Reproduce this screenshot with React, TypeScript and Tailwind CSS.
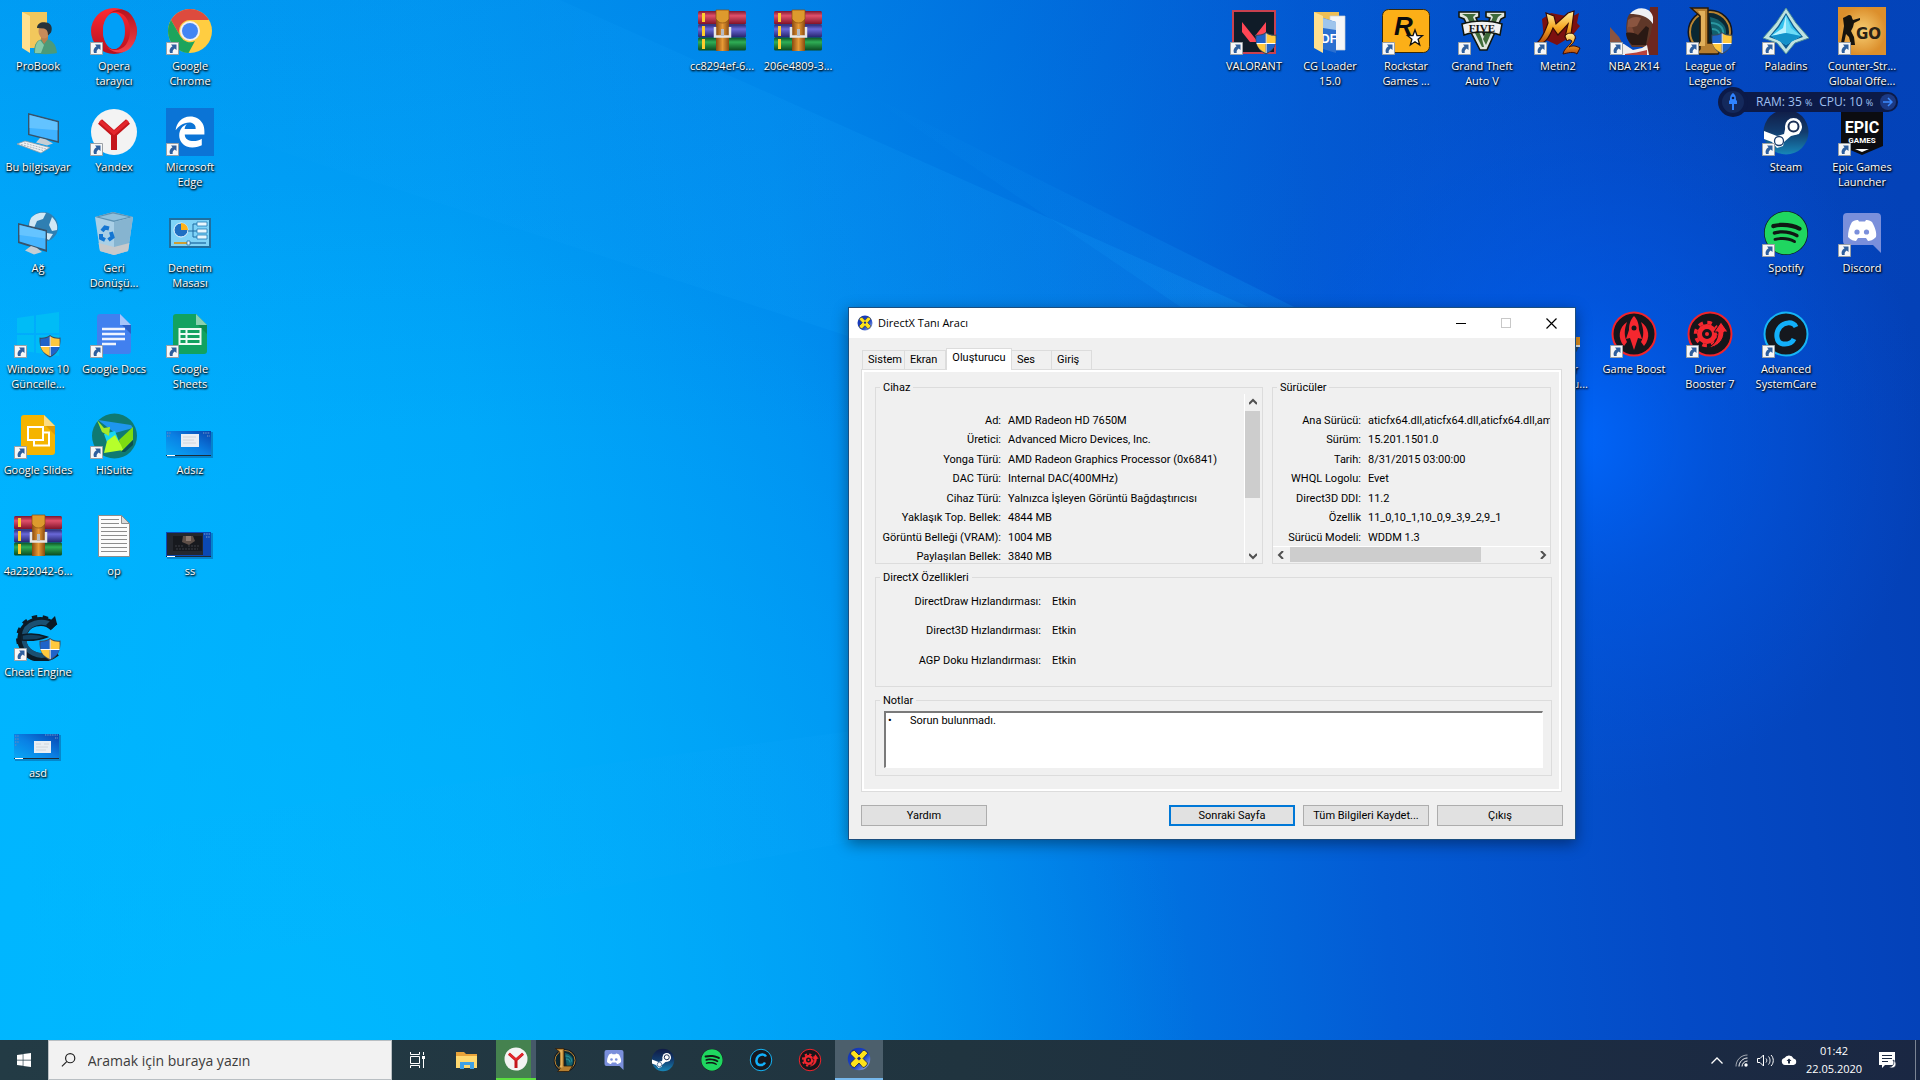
import type { ReactNode } from "react";
import { FaEdgeLegacy, FaSpotify, FaWindows } from "react-icons/fa";

type IconProps = { className?: string };

function Svg({ className = "h-12 w-12", children }: IconProps & { children: ReactNode }) {
  return (
    <svg viewBox="0 0 48 48" className={className} aria-hidden="true">
      {children}
    </svg>
  );
}

/* ---------- overlays ---------- */

function Shield() {
  return (
    <g>
      <path d="M36 25c3 2.500 7 3 10.500 2.500C47 38 43.500 43.500 36 47.500 28.500 43.500 25 38 25.500 27.500 29 28 33 27.500 36 25z" fill="#3a4a5e" />
      <path d="M35.500 26.500v9.500H26.500c-.3-2.500-.2-5 0-7.300 3.500.2 6.500-.3 9-2.200z" fill="#1f63c9" />
      <path d="M36.500 26.500c2.500 1.900 5.500 2.400 9 2.200.2 2.300.3 4.800 0 7.300h-9z" fill="#ffc83d" />
      <path d="M26.700 37h8.800v9c-5-2.500-7.800-5.500-8.800-9z" fill="#ffc83d" />
      <path d="M36.500 37h8.800c-1 3.500-3.800 6.500-8.800 9z" fill="#1f63c9" />
      <path d="M35.700 26.500h.9v19.500h-.9zM26.500 36h19v.9h-19z" fill="#fff" />
    </g>
  );
}

function ShortcutBadge() {
  return (
    <svg viewBox="0 0 13 13" className="absolute bottom-0 left-0 h-[13px] w-[13px]" aria-hidden="true">
      <path d="M.5.5h12v12H.5z" fill="#f7f7f7" stroke="#9aa0a6" />
      <path d="M5 2.500h5.500V8L8.700 6.400C6.900 7.600 6.400 9 6.700 11H4C2.900 8.300 3.900 5.700 6.500 4.200z" fill="#2e5f9e" />
    </svg>
  );
}

/* ---------- desktop icons ---------- */

function UserFolder({ className }: IconProps) {
  return (
    <Svg className={className}>
      <path d="M8 5h25v36H16l-8-1z" fill="#f2c75c" />
      <path d="M8 5l8 4v37l-8-5z" fill="#ffe08f" />
      <path d="M20 46c0-9 3-14 10-14 8 0 12 5 13 14-6 1.500-17 1.500-23 0z" fill="#4c9a78" />
      <path d="M27 32l3 5 4-5v-5h-7z" fill="#b57f4f" />
      <ellipse cx="30" cy="24" rx="5.500" ry="7.500" fill="#c68b5a" />
      <path d="M23 21c0-5 5-6.500 9-5.500 5 .5 7 5 5 10l-3 3c0-4-1-6-4-7z" fill="#26323a" />
      <path d="M26 33l4 5-3 8h-6c0-6 1-11 5-13z" fill="#86c9a8" />
    </Svg>
  );
}

function Opera({ className }: IconProps) {
  return (
    <Svg className={className}>
      <defs>
        <linearGradient id="opera-a" x1="0" y1="0" x2="0" y2="1">
          <stop offset="0" stopColor="#ff2a32" />
          <stop offset="1" stopColor="#b5101f" />
        </linearGradient>
        <linearGradient id="opera-b" x1="0" y1="0" x2="0" y2="1">
          <stop offset="0" stopColor="#a90e1a" />
          <stop offset="1" stopColor="#ff4a50" />
        </linearGradient>
      </defs>
      <path fillRule="evenodd" d="M24 1a23 23 0 1 0 0 46 23 23 0 0 0 0-46zm0 5c5.500 0 10 8 10 18s-4.500 18-10 18-11-8-11-18S18.500 6 24 6z" fill="url(#opera-a)" />
      <path d="M17 9c3-3 5-4 8-4 9 0 15 8 15 19s-6 19-15 19c-3 0-5-1-8-3 8 8 20 7 25-1 6-8 6-22 0-30C37 1 25 0 17 9z" fill="url(#opera-b)" opacity=".85" />
      <ellipse cx="24" cy="24" rx="11" ry="18" fill="#009ff8" />
    </Svg>
  );
}

function Chrome({ className }: IconProps) {
  return (
    <Svg className={className}>
      <circle cx="24" cy="24" r="22" fill="#ffcd41" />
      <path d="M5 13A22 22 0 0 1 43 13H24a11 11 0 0 0-9.500 16.500z" fill="#dd4b3e" />
      <path d="M5 13l9.500 16.500A11 11 0 0 0 29 34l-6.500 12A22 22 0 0 1 5 13z" fill="#1ca45c" />
      <circle cx="24" cy="24" r="10" fill="#f1f1f1" />
      <circle cx="24" cy="24" r="8" fill="#4285f4" />
    </Svg>
  );
}

function ThisPc({ className }: IconProps) {
  return (
    <Svg className={className}>
      <path d="M14 5l31 8v22l-31-8z" fill="#37536b" />
      <path d="M15.500 7l28 7.300v18.700l-28-7z" fill="#3fb2ff" />
      <path d="M15.500 7l28 7.300v8L15.500 20z" fill="#74cbff" opacity=".7" />
      <path d="M26 30l6 1.500 7 4-6 2-11-3z" fill="#c6ced4" />
      <path d="M3 36l8-3 25 6.500-9 5.500z" fill="#eef1f3" stroke="#8e9aa3" strokeWidth=".8" />
      <path d="M7 36.500l22 6M10 35l22 6" stroke="#98a4ad" strokeWidth=".8" strokeDasharray="2 1" />
    </Svg>
  );
}

function Yandex({ className }: IconProps) {
  return (
    <Svg className={className}>
      <circle cx="24" cy="24" r="23" fill="#f3f3f3" />
      <path d="M10 13.500l14 12.500 14-12.500M24 25v17" fill="none" stroke="#c4161c" strokeWidth="6" />
      <path d="M10 13l14 12 14-12" fill="none" stroke="#e3262c" strokeWidth="3.500" />
    </Svg>
  );
}

function Edge() {
  return (
    <div className="flex h-12 w-12 items-center justify-center bg-[#0b74d6]">
      <FaEdgeLegacy className="h-8 w-8 text-white" />
    </div>
  );
}

function Network({ className }: IconProps) {
  return (
    <Svg className={className}>
      <circle cx="29" cy="18" r="15" fill="#2f7fb2" />
      <path d="M17 9c4-5 10-6 15-5l-3 6-6 2-3 7-5 1c0-4 0-7 2-11zM38 8c4 4 6 8 5 13l-5 1-3-6zM33 24l6 1-4 6-4-2z" fill="#cfe8f5" />
      <path d="M4 14l29 7v22L4 34z" fill="#37536b" />
      <path d="M5.500 16l26 6.500v18L5.500 32.500z" fill="#45b5ff" />
      <path d="M5.500 16l26 6.500v7L5.500 26z" fill="#7ccfff" opacity=".6" />
      <path d="M17 37l6 2 5 4-8 2.500-9-4z" fill="#c6ced4" />
    </Svg>
  );
}

function RecycleBin({ className }: IconProps) {
  return (
    <Svg className={className}>
      <path d="M5 8l18-5 20 5-5 34-14 4-14-4z" fill="#a9cfe6" />
      <path d="M5 8l18-5 20 5-19 5z" fill="#5d92b3" />
      <path d="M9 8l14-3.500L39 8l-15 3.500z" fill="#8fc0dc" />
      <path d="M24 13l19-5-5 34-14 4z" fill="#86b4d0" />
      <path d="M8.500 34l15.500 4 15.500-4-1.500 8-14 4-14-4z" fill="#c7c9cb" />
      <g fill="none" stroke="#1476d2" strokeWidth="4">
        <path d="M12 22l3-3.500 4 1" />
        <path d="M21 23l1.500 5-4 3" />
        <path d="M15 31l-4-2v-4" />
      </g>
    </Svg>
  );
}

function ControlPanel({ className }: IconProps) {
  return (
    <Svg className={className}>
      <path d="M3 9h42v30H3z" fill="#1f6f9f" />
      <path d="M5 11h38v26H5z" fill="#7fd3f7" />
      <circle cx="15" cy="21" r="7" fill="#1f6fc2" stroke="#e8f6fd" />
      <path d="M15 21v-7a7 7 0 0 1 7 7z" fill="#ffb31a" />
      <path d="M22 22h5v-7h4M27 22h4M27 22v6h4" fill="none" stroke="#1e6aa1" />
      <path d="M31 13h10v4H31zM31 20h10v4H31zM31 26h10v4H31z" fill="#e9f7fd" stroke="#1e7bb6" strokeWidth=".8" />
      <path d="M8 34h32" stroke="#19669d" strokeWidth="1.200" />
      <path d="M8 34h15" stroke="#ffa200" strokeWidth="1.500" />
      <path d="M21 32h3v4h-3z" fill="#e9f7fd" stroke="#19669d" strokeWidth=".7" />
    </Svg>
  );
}

function WindowsUpdate({ className }: IconProps) {
  return (
    <Svg className={className}>
      <path d="M3 8l17-2.500V23H3zM22 5.200L45 2v21H22zM3 25h17v17.500L3 40zM22 25h23v21l-23-3.200z" fill="#00bcf6" />
      <Shield />
    </Svg>
  );
}

function GoogleDocs({ className }: IconProps) {
  return (
    <Svg className={className}>
      <path d="M10 4h20l11 11v26a3 3 0 0 1-3 3H10a3 3 0 0 1-3-3V7a3 3 0 0 1 3-3z" fill="#4180ef" />
      <path d="M30 4l11 11H30z" fill="#a6c5fa" />
      <path d="M32 15h9v9z" fill="#2b5fc7" />
      <path d="M12 19h23M12 24h23M12 29h23M12 34h14" stroke="#eef4ff" strokeWidth="2.400" />
    </Svg>
  );
}

function GoogleSheets({ className }: IconProps) {
  return (
    <Svg className={className}>
      <path d="M10 4h20l11 11v26a3 3 0 0 1-3 3H10a3 3 0 0 1-3-3V7a3 3 0 0 1 3-3z" fill="#12a260" />
      <path d="M30 4l11 11H30z" fill="#8ad1b0" />
      <path d="M32 15h9v9z" fill="#0d8a50" />
      <path d="M13.500 19h21v15h-21zM13.500 24h21M13.500 29h21M20.500 19v15" fill="none" stroke="#eefaf3" strokeWidth="2" />
    </Svg>
  );
}

function GoogleSlides({ className }: IconProps) {
  return (
    <Svg className={className}>
      <path d="M10 4h20l11 11v26a3 3 0 0 1-3 3H10a3 3 0 0 1-3-3V7a3 3 0 0 1 3-3z" fill="#f5b400" />
      <path d="M30 4l11 11H30z" fill="#fbdb83" />
      <path d="M32 15h9v9z" fill="#dd9a05" />
      <path d="M20 21.500h15v13H20z" fill="none" stroke="#fff" strokeWidth="2" />
      <path d="M14 16h15v13H14z" fill="#f5b400" stroke="#fff" strokeWidth="2" />
    </Svg>
  );
}

function HiSuite({ className }: IconProps) {
  return (
    <Svg className={className}>
      <circle cx="24.500" cy="25" r="22.500" fill="#0f7a72" />
      <path d="M8 9l33 5 2 3-18 5z" fill="#1e96ee" />
      <path d="M14 23l11-3 5 13-11 4z" fill="#17d5f2" />
      <path d="M7 9l7 8 6-1-1 9-7-4z" fill="#a5e82a" />
      <path d="M29 29l14-13v13L31 41z" fill="#7ddc12" />
      <path d="M17 30l8-6 6 10 2 5-19 3z" fill="#b6ff2b" />
      <path d="M31 41l12-12v5l-8 7z" fill="#0a4f55" />
    </Svg>
  );
}

function ThumbLight({ className }: IconProps) {
  return (
    <Svg className={className}>
      <defs>
        <linearGradient id="thumb-light" x1="0" y1="1" x2="1" y2="0">
          <stop offset="0" stopColor="#08aaf6" />
          <stop offset=".5" stopColor="#0a80e4" />
          <stop offset="1" stopColor="#0844ae" />
        </linearGradient>
      </defs>
      <path d="M1 21h46v26H1z" fill="#0b4f91" opacity=".45" />
      <path d="M0 20h45v25H0z" fill="url(#thumb-light)" />
      <path d="M15 23h18v13H15z" fill="#e9eef3" />
      <path d="M17 26h13M17 29h11M17 32h13" stroke="#c9ced4" strokeWidth=".8" />
      <path d="M1 22h4M1 25h3M37 22h7M41 25h3" stroke="#5a87c4" strokeWidth="1.300" strokeDasharray="1 .7" />
      <path d="M0 44h45v1H0z" fill="#1c2c38" />
      <path d="M1 44h8v1H1z" fill="#fff" />
    </Svg>
  );
}

function ThumbWindow({ className }: IconProps) {
  return (
    <Svg className={className}>
      <defs>
        <linearGradient id="thumb-window" x1="0" y1="1" x2="1" y2="0">
          <stop offset="0" stopColor="#08aaf6" />
          <stop offset=".5" stopColor="#0a80e4" />
          <stop offset="1" stopColor="#0844ae" />
        </linearGradient>
      </defs>
      <path d="M1 21h46v26H1z" fill="#0b4f91" opacity=".45" />
      <path d="M0 20h45v25H0z" fill="url(#thumb-window)" />
      <path d="M20 27h17v12H20z" fill="#e9eef3" />
      <path d="M22 30h5M30 30h5M22 33h12M22 36h10" stroke="#c9ced4" strokeWidth=".8" />
      <path d="M1 22h4M1 25h4M1 28h4M1 31h2M31 21h13M41 24h3" stroke="#5a87c4" strokeWidth="1.300" strokeDasharray="1 .7" />
      <path d="M0 44h45v1H0z" fill="#1c2c38" />
      <path d="M1 44h8v1H1z" fill="#fff" />
    </Svg>
  );
}

function ThumbDark({ className }: IconProps) {
  return (
    <Svg className={className}>
      <path d="M1 21h46v26H1z" fill="#0b4f91" opacity=".45" />
      <path d="M0 20h45v25H0z" fill="#0b49b4" />
      <path d="M1 21h36v22H1z" fill="#24272e" />
      <path d="M7 24h29v15H7z" fill="#17191e" />
      <path d="M17 24h10l2 5-6 4-7-3z" fill="#5e4f48" />
      <path d="M20 24h5v5h-5z" fill="#8e7a70" />
      <path d="M9 34h9M22 34h11M10 37h22" stroke="#3c3e44" strokeWidth="1.200" strokeDasharray="2 1" />
      <path d="M38 22h6M40 25h4" stroke="#5a87c4" strokeWidth="1.300" strokeDasharray="1 .7" />
      <path d="M0 44h45v1H0z" fill="#1c2c38" />
      <path d="M1 44h8v1H1z" fill="#fff" />
    </Svg>
  );
}

function WinRar({ className }: IconProps) {
  return (
    <Svg className={className}>
      <defs>
        <linearGradient id="rar-red" x1="0" y1="0" x2="0" y2="1">
          <stop offset="0" stopColor="#7a1730" />
          <stop offset=".35" stopColor="#e0506a" />
          <stop offset="1" stopColor="#7d1026" />
        </linearGradient>
        <linearGradient id="rar-blue" x1="0" y1="0" x2="0" y2="1">
          <stop offset="0" stopColor="#2a2a74" />
          <stop offset=".35" stopColor="#6a68d8" />
          <stop offset="1" stopColor="#25236b" />
        </linearGradient>
        <linearGradient id="rar-green" x1="0" y1="0" x2="0" y2="1">
          <stop offset="0" stopColor="#0d4f24" />
          <stop offset=".35" stopColor="#2fae55" />
          <stop offset="1" stopColor="#0b4a20" />
        </linearGradient>
        <linearGradient id="rar-belt" x1="0" y1="0" x2="1" y2="0">
          <stop offset="0" stopColor="#8a4a10" />
          <stop offset=".5" stopColor="#e79a35" />
          <stop offset="1" stopColor="#8a4a10" />
        </linearGradient>
      </defs>
      <rect x="0" y="4" width="48" height="13.500" rx="1.500" fill="url(#rar-red)" />
      <rect x="0" y="17.500" width="48" height="13" rx="1.500" fill="url(#rar-blue)" />
      <rect x="0" y="30.500" width="48" height="13" rx="1.500" fill="url(#rar-green)" />
      <path d="M4 6h3v9H4zM4 19h3v10H4zM4 32h3v10H4z" fill="#ffce2e" />
      <path d="M18 3h13v41H18z" fill="url(#rar-belt)" />
      <path d="M18 3h13v9c-2 3-4 4-6.500 4S20 15 18 12z" fill="#dd9a2d" stroke="#8a4a10" strokeWidth=".7" />
      <path d="M17 20v9.500h15V20" fill="none" stroke="#e6e6e6" strokeWidth="2.500" />
      <path d="M23 22h3v7h-3z" fill="#b9bcc2" />
    </Svg>
  );
}

function TextFile({ className }: IconProps) {
  return (
    <Svg className={className}>
      <path d="M8.500 3.500h23l8 8v33h-31z" fill="#fcfcfc" stroke="#8c8c8c" />
      <path d="M31.500 3.500v8h8z" fill="#d9d9d9" stroke="#8c8c8c" />
      <path d="M11 7.500h18M11 11.500h18M11 15.500h26M11 19.500h26M11 23.500h26M11 27.500h26M11 31.500h26M11 35.500h26M11 39.500h26" stroke="#8d8d8d" />
    </Svg>
  );
}

function CheatEngine({ className }: IconProps) {
  return (
    <Svg className={className}>
      {/* gear ring, left open on the right */}
      <path
        d="M41 13A20 20 0 1 0 41 37"
        fill="none"
        stroke="#0b1a26"
        strokeWidth="6"
        strokeDasharray="5 5"
      />
      <path d="M40 14C30 4 10 8 8 24s18 28 34 15" fill="none" stroke="#0b1a26" strokeWidth="9" />
      <path d="M39 13C29 6 11 9 10 24s16 24 30 14" fill="none" stroke="#1b5072" strokeWidth="5" />
      <path d="M41 3l2 8-5 5-6-4z" fill="#0b1a26" />
      <path d="M8 22c9-2 17-1 25 2-8 3-16 4-25 3z" fill="#14405f" stroke="#0b1a26" strokeWidth="1.500" />
      <Shield />
    </Svg>
  );
}

function Valorant({ className }: IconProps) {
  return (
    <Svg className={className}>
      <path d="M3 4h42v42H3z" fill="#101c28" stroke="#c8414f" strokeWidth="2" />
      <path d="M12 15l16 20h-8l-8-10zM36 15v10l-3 4h-8z" fill="#ff4655" />
      <Shield />
    </Svg>
  );
}

function LoaderFolder({ className }: IconProps) {
  return (
    <Svg className={className}>
      <path d="M8 5h25v36H16l-8-1z" fill="#eebf55" />
      <path d="M24 9h15v34H24z" fill="#f4f6f8" stroke="#c9d0d6" strokeWidth=".7" />
      <path d="M17 11l13 4v31l-13-4z" fill="#2a6fd0" />
      <path d="M17 11l13 4v8l-13-2z" fill="#9ec5ec" />
      <text x="15" y="36" fontFamily="Liberation Sans, sans-serif" fontSize="12" fontWeight="700" fill="#fff">
        DF
      </text>
      <path d="M8 5l9 4v37l-9-5z" fill="#ffe08f" />
    </Svg>
  );
}

function Rockstar({ className }: IconProps) {
  return (
    <Svg className={className}>
      <rect x=".5" y="2.500" width="47" height="43" rx="6" fill="#fcaf17" stroke="#3a2a08" />
      <text x="12" y="28" fontFamily="Liberation Sans, sans-serif" fontSize="26" fontWeight="700" fontStyle="italic" fill="#0c0c0c">
        R
      </text>
      <path d="M33 23l2 5.500 5.500.2-4.400 3.600 1.600 5.700-4.700-3.200-4.700 3.200 1.600-5.700-4.400-3.600 5.500-.2z" fill="#fff" stroke="#111" strokeWidth="1.300" />
    </Svg>
  );
}

function Gta({ className }: IconProps) {
  return (
    <Svg className={className}>
      <path d="M1 5h20v5l-3 1 8 17 6-17-4-1V5h19v5l-4 2-14 31h-7L6 12l-5-2z" fill="#dfe5dd" stroke="#10160f" strokeWidth="1.600" />
      <path d="M4 7h14l-3 3 9 22 2 8h-2L9 10zM32 7h12l-4 3-12 28-3-6 10-22z" fill="#3f6b3a" />
      <path d="M4 17c12-4 28-4 40 0l-2 11c-10-4-26-4-36 0z" fill="#f1f1f1" stroke="#10160f" strokeWidth="1.500" />
      <text x="24" y="25" textAnchor="middle" fontFamily="Liberation Serif, serif" fontSize="11" fontWeight="700" fill="#111">
        FIVE
      </text>
    </Svg>
  );
}

function Metin2({ className }: IconProps) {
  return (
    <Svg className={className}>
      <defs>
        <linearGradient id="metin" x1="0" y1="0" x2="0" y2="1">
          <stop offset="0" stopColor="#fff0a0" />
          <stop offset=".5" stopColor="#f5a623" />
          <stop offset="1" stopColor="#b4480c" />
        </linearGradient>
      </defs>
      <path d="M8 12l9-6 20 4 8-4-2 10 3 3-8 10-15 9-13-6z" fill="#7c1010" />
      <path d="M1 37c5-2 9-10 13-21l-2-10 8 3 2 8 12-11 6-2-3 24 4 3-8 2-2-3 3-13-10 11-5-7c-4 10-8 17-18 16z" fill="url(#metin)" stroke="#3a0c04" strokeWidth="1.200" />
      <path d="M31 29c3-5 12-3 10 3-1 4-4 6-6 8 4-2 7-1 11 1l-3 6c-4-3-9-1-14 0 1-6 7-8 9-13-2-2-4-1-5 0z" fill="url(#metin)" stroke="#3a0c04" />
    </Svg>
  );
}

function Nba({ className }: IconProps) {
  return (
    <Svg className={className}>
      <path d="M40 0h8v48H36z" fill="#6d271f" />
      <path d="M0 20l9 10 7 13H0z" fill="#8a5440" />
      <path d="M17 13c1-7 7-10 13-9 9 1 13 8 12 16-1 8-4 14-6 20H22c-5-6-7-16-5-27z" fill="#5f3728" />
      <path d="M18 13c3-3 9-4 13-2l-4 8-10 3z" fill="#8a5540" />
      <path d="M17 22c0-3 4-3 6 0l1 4-6 2z" fill="#7c4836" />
      <path d="M16 26c5-1 9 0 12 2l8-9 3 2-3 17H22c-3-3-6-7-6-12z" fill="#2a1914" />
      <path d="M20 7c6-8 20-8 23 3v7C38 9 29 7 20 7z" fill="#eef0f3" />
      <path d="M0 48l4-13 10 2 9 6 9-2 5-3 2 10z" fill="#f1eeee" />
      <path d="M15 47c8-1 15-2 22-4v5H15z" fill="#b8423c" />
    </Svg>
  );
}

function LolArt() {
  return (
    <>
      <circle cx="24" cy="25" r="21" fill="#0a2733" stroke="#15161b" strokeWidth="3" />
      <circle cx="24" cy="25" r="20" fill="none" stroke="#b98532" strokeWidth="2" />
      <path d="M24 10c10 2 17 8 16 17s-6 12-12 14z" fill="#12606d" />
      <path d="M25 16c8 0 13 5 12 11M26 22c5 0 8 3 8 7" fill="none" stroke="#2a97a1" strokeWidth="2" />
      <path d="M5 1h17v35h17l-7 11H9l5-5V9z" fill="#b67f30" stroke="#2a1b0a" strokeWidth="1.500" />
      <path d="M12 4h7v35H12l3-5V9z" fill="#e2b15c" />
    </>
  );
}

function LeagueDesktop({ className }: IconProps) {
  return (
    <Svg className={className}>
      <LolArt />
      <Shield />
    </Svg>
  );
}

function League({ className }: IconProps) {
  return (
    <Svg className={className}>
      <LolArt />
    </Svg>
  );
}

function Paladins({ className }: IconProps) {
  return (
    <Svg className={className}>
      <path d="M24 1l10 15 13 15-14 5-9 11-9-11-14-5 13-15z" fill="#bfe3e0" stroke="#4d8f97" />
      <path d="M24 6l8 13 9 11-11 4-6 8-6-8-11-4 9-11z" fill="#0b5d93" />
      <path d="M24 8l7 12 8 9-15 9-15-9 8-9z" fill="#35c3ee" />
      <path d="M24 8l-3 13-12 8 15-3z" fill="#b9f2ff" />
      <path d="M24 8l5 13 10 8-15-3z" fill="#6cdcf7" />
      <path d="M9 29l15-3 15 3-15 9z" fill="#1391c9" />
    </Svg>
  );
}

function CounterStrike({ className }: IconProps) {
  return (
    <Svg className={className}>
      <defs>
        <radialGradient id="csgo">
          <stop offset="0" stopColor="#f7cf74" />
          <stop offset="1" stopColor="#dc8f2c" />
        </radialGradient>
      </defs>
      <path d="M0 0h48v48H0z" fill="url(#csgo)" />
      <path d="M9 9c2-2 5-1 5 2l1 2 7-2v2l-6 3-1 4-2 4 3 6 1 8h-4l-2-8-3-3-2 9H3l2-11 1-6-1-8z" fill="#16130e" />
      <text x="18" y="32" fontFamily="DejaVu Sans, sans-serif" fontSize="15" fontWeight="700" fill="#2b2316">
        GO
      </text>
    </Svg>
  );
}

function Steam({ className }: IconProps) {
  return (
    <Svg className={className}>
      <defs>
        <linearGradient id="steam" x1="0" y1="0" x2="0" y2="1">
          <stop offset="0" stopColor="#101b45" />
          <stop offset=".5" stopColor="#123c6e" />
          <stop offset="1" stopColor="#1787b8" />
        </linearGradient>
      </defs>
      <circle cx="24" cy="24" r="22.500" fill="url(#steam)" />
      <path d="M2 23l13 5 7-2 2-9 8-6 8 8-3 7-8 2-7 6-1 4-6 2-5-6-8-3z" fill="#fff" />
      <circle cx="31.500" cy="18.500" r="8.500" fill="#fff" />
      <circle cx="31.500" cy="18.500" r="5" fill="#fff" stroke="#1b2f55" strokeWidth="2" />
      <circle cx="17" cy="33" r="4.500" fill="#fff" stroke="#1b3e6e" strokeWidth="1.300" />
    </Svg>
  );
}

function Epic({ className }: IconProps) {
  return (
    <Svg className={className}>
      <path d="M3 1h42v37l-21 9L3 38z" fill="#0c0c10" />
      <text x="24" y="25" textAnchor="middle" fontFamily="Liberation Sans Narrow, Roboto, sans-serif" fontSize="16" fontWeight="700" fill="#fff">
        EPIC
      </text>
      <text x="24" y="35" textAnchor="middle" fontFamily="Roboto, sans-serif" fontSize="8" fontWeight="700" fill="#fff">
        GAMES
      </text>
      <path d="M17 41h14l-7 3z" fill="#fff" />
    </Svg>
  );
}

function Spotify({ className = "h-12 w-12" }: IconProps) {
  return (
    <span className={`flex items-center justify-center ${className}`}>
      <span className="flex h-11/12 w-11/12 rounded-full bg-[#101814]">
        <FaSpotify className="h-full w-full text-[#1fd660]" />
      </span>
    </span>
  );
}

function Discord({ className }: IconProps) {
  return (
    <Svg className={className}>
      <path d="M9 4h30a4 4 0 0 1 4 4v36l-8-8H9a4 4 0 0 1-4-4V8a4 4 0 0 1 4-4z" fill="#7a8fdb" />
      <path d="M14 13c3-2 5-2 6-2l1 1.500h6L28 11c1 0 3 0 6 2 3 5 5 11 4 15-3 3-6 4-8 4l-2-3h-8l-2 3c-2 0-5-1-8-4 0-5 1-10 4-15z" fill="#fff" />
      <circle cx="19" cy="23" r="2.600" fill="#7a8fdb" />
      <circle cx="28.500" cy="23" r="2.600" fill="#7a8fdb" />
    </Svg>
  );
}

function GameBoost({ className }: IconProps) {
  return (
    <Svg className={className}>
      <circle cx="24" cy="24" r="21.500" fill="#15161a" stroke="#f0242c" strokeWidth="2" />
      <path d="M24 6c4 4 5 9 5 14l3 9-4-1-4 12-4-12-4 1 3-9c0-5 1-10 5-14z" fill="#f5272f" />
      <circle cx="24" cy="18" r="2.500" fill="#15161a" />
      <path d="M17 12c-8 5-10 16-3 24l3-4c-3-6-3-12 0-20zM31 12c8 5 10 16 3 24l-3-4c3-6 3-12 0-20z" fill="#f5272f" />
    </Svg>
  );
}

function DriverBooster({ className }: IconProps) {
  return (
    <Svg className={className}>
      <circle cx="24" cy="24" r="21.500" fill="#15161a" stroke="#f0242c" strokeWidth="2" />
      <circle cx="21" cy="24" r="7.500" fill="none" stroke="#f5272f" strokeWidth="5" />
      <circle cx="21" cy="24" r="11.500" fill="none" stroke="#f5272f" strokeWidth="3.500" strokeDasharray="4.600 4.430" />
      <path d="M22 38c7-4 10-9 10-16h-4l7-10 7 10h-4c0 8-6 15-16 16z" fill="#f5272f" stroke="#15161a" />
      <circle cx="21" cy="24" r="2" fill="#f5272f" />
    </Svg>
  );
}

function SystemCare({ className }: IconProps) {
  return (
    <Svg className={className}>
      <circle cx="24" cy="24" r="21.500" fill="#15181e" stroke="#16b4f5" strokeWidth="2" />
      <path d="M34 17c-3-6-12-5-16 0-5 6-4 16 3 17 5 .5 9-1 11-5" fill="none" stroke="#12b0fa" strokeWidth="5" />
    </Svg>
  );
}

function DirectX({ className }: IconProps) {
  return (
    <Svg className={className}>
      <defs>
        <linearGradient id="directx" x1="0" y1="0" x2="1" y2="1">
          <stop offset="0" stopColor="#0d2fae" />
          <stop offset=".6" stopColor="#2148c8" />
          <stop offset="1" stopColor="#b8c6dc" />
        </linearGradient>
      </defs>
      <circle cx="24" cy="24" r="22.500" fill="url(#directx)" />
      <path d="M15 7l9 9 8-9c4-1 8 2 9 6l-9 10 9 9c-1 5-4 8-9 9l-8-9-9 9c-5-1-8-4-8-9l9-9-9-9c1-5 4-7 8-7z" fill="#ffe31a" stroke="#1a1f3c" strokeWidth="1.500" />
      <path d="M24 19l4 4-4 4-4-4z" fill="#10268e" />
    </Svg>
  );
}

function ToolInstaller({ className }: IconProps) {
  return (
    <Svg className={className}>
      <path d="M4 27h42v8H4z" fill="#e5931f" />
      <path d="M4 35h42v2H4z" fill="#e7edf2" />
      <path d="M8 37h37l-5 9H12z" fill="#24486b" />
    </Svg>
  );
}

/* ---------- wallpaper ---------- */

function Wallpaper() {
  return (
    <svg viewBox="0 0 1920 1080" preserveAspectRatio="none" className="absolute inset-0 h-full w-full" aria-hidden="true">
      <defs>
        <linearGradient id="sky" gradientUnits="userSpaceOnUse" x1="0" y1="600" x2="1920" y2="420">
          <stop offset="0" stopColor="#00b0ff" />
          <stop offset=".25" stopColor="#00a4f9" />
          <stop offset=".42" stopColor="#0091f1" />
          <stop offset=".55" stopColor="#0078e4" />
          <stop offset=".7" stopColor="#035bd4" />
          <stop offset=".85" stopColor="#044ac6" />
          <stop offset="1" stopColor="#0440b6" />
        </linearGradient>
        <linearGradient id="topshade" x1="0" y1="0" x2="0" y2="1">
          <stop offset="0" stopColor="#0052c8" stopOpacity=".2" />
          <stop offset=".4" stopColor="#0052c8" stopOpacity="0" />
        </linearGradient>
        <radialGradient id="source" gradientUnits="userSpaceOnUse" cx="1570" cy="440" r="360">
          <stop offset="0" stopColor="#0068ff" stopOpacity=".95" />
          <stop offset=".4" stopColor="#005ef0" stopOpacity=".5" />
          <stop offset="1" stopColor="#0058e6" stopOpacity="0" />
        </radialGradient>
        <radialGradient id="glow" gradientUnits="userSpaceOnUse" cx="300" cy="1080" r="900">
          <stop offset="0" stopColor="#00bcff" stopOpacity=".8" />
          <stop offset="1" stopColor="#00bcff" stopOpacity="0" />
        </radialGradient>
        <linearGradient id="beam" x1="0" y1="0" x2="1" y2="0">
          <stop offset="0" stopColor="#16aaff" stopOpacity="0" />
          <stop offset="1" stopColor="#16aaff" stopOpacity=".2" />
        </linearGradient>
      </defs>
      <path d="M0 0h1920v1080H0z" fill="url(#sky)" />
      <path d="M0 0h1920v1080H0z" fill="url(#topshade)" />
      <path d="M0 0h1920v1080H0z" fill="url(#source)" />
      <path d="M0 0h1920v1080H0z" fill="url(#glow)" />
      <path d="M560 0l740 330-440 10L0 60V0z" fill="url(#beam)" />
      <path d="M860 90l440 220-100 10z" fill="url(#beam)" />
      <path d="M0 845l860-115v110L0 1000z" fill="url(#beam)" opacity=".5" />
    </svg>
  );
}

/* ---------- desktop ---------- */

type Item = {
  cell: string;
  label: string[];
  icon: (p: IconProps) => ReactNode;
  shortcut?: boolean;
};

const items: Item[] = [
  { cell: "col-start-1 row-start-1", label: ["ProBook"], icon: UserFolder },
  { cell: "col-start-1 row-start-2", label: ["Bu bilgisayar"], icon: ThisPc },
  { cell: "col-start-1 row-start-3", label: ["Ağ"], icon: Network },
  { cell: "col-start-1 row-start-4", label: ["Windows 10", "Güncelle..."], icon: WindowsUpdate, shortcut: true },
  { cell: "col-start-1 row-start-5", label: ["Google Slides"], icon: GoogleSlides, shortcut: true },
  { cell: "col-start-1 row-start-6", label: ["4a232042-6..."], icon: WinRar },
  { cell: "col-start-1 row-start-7", label: ["Cheat Engine"], icon: CheatEngine, shortcut: true },
  { cell: "col-start-1 row-start-8", label: ["asd"], icon: ThumbWindow },
  { cell: "col-start-2 row-start-1", label: ["Opera", "tarayıcı"], icon: Opera, shortcut: true },
  { cell: "col-start-2 row-start-2", label: ["Yandex"], icon: Yandex, shortcut: true },
  { cell: "col-start-2 row-start-3", label: ["Geri", "Dönüşü..."], icon: RecycleBin },
  { cell: "col-start-2 row-start-4", label: ["Google Docs"], icon: GoogleDocs, shortcut: true },
  { cell: "col-start-2 row-start-5", label: ["HiSuite"], icon: HiSuite, shortcut: true },
  { cell: "col-start-2 row-start-6", label: ["op"], icon: TextFile },
  { cell: "col-start-3 row-start-1", label: ["Google", "Chrome"], icon: Chrome, shortcut: true },
  { cell: "col-start-3 row-start-2", label: ["Microsoft", "Edge"], icon: Edge, shortcut: true },
  { cell: "col-start-3 row-start-3", label: ["Denetim", "Masası"], icon: ControlPanel },
  { cell: "col-start-3 row-start-4", label: ["Google", "Sheets"], icon: GoogleSheets, shortcut: true },
  { cell: "col-start-3 row-start-5", label: ["Adsız"], icon: ThumbLight },
  { cell: "col-start-3 row-start-6", label: ["ss"], icon: ThumbDark },
  { cell: "col-start-10 row-start-1", label: ["cc8294ef-6..."], icon: WinRar },
  { cell: "col-start-11 row-start-1", label: ["206e4809-3..."], icon: WinRar },
  { cell: "col-start-17 row-start-1", label: ["VALORANT"], icon: Valorant, shortcut: true },
  { cell: "col-start-18 row-start-1", label: ["CG Loader", "15.0"], icon: LoaderFolder },
  { cell: "col-start-19 row-start-1", label: ["Rockstar", "Games ..."], icon: Rockstar, shortcut: true },
  { cell: "col-start-20 row-start-1", label: ["Grand Theft", "Auto V"], icon: Gta, shortcut: true },
  { cell: "col-start-21 row-start-1", label: ["Metin2"], icon: Metin2, shortcut: true },
  { cell: "col-start-22 row-start-1", label: ["NBA 2K14"], icon: Nba, shortcut: true },
  { cell: "col-start-23 row-start-1", label: ["League of", "Legends"], icon: LeagueDesktop, shortcut: true },
  { cell: "col-start-24 row-start-1", label: ["Paladins"], icon: Paladins, shortcut: true },
  { cell: "col-start-25 row-start-1", label: ["Counter-Str...", "Global Offe..."], icon: CounterStrike, shortcut: true },
  { cell: "col-start-24 row-start-2", label: ["Steam"], icon: Steam, shortcut: true },
  { cell: "col-start-25 row-start-2", label: ["Epic Games", "Launcher"], icon: Epic, shortcut: true },
  { cell: "col-start-24 row-start-3", label: ["Spotify"], icon: Spotify, shortcut: true },
  { cell: "col-start-25 row-start-3", label: ["Discord"], icon: Discord, shortcut: true },
  { cell: "col-start-21 row-start-4", label: ["Booster", "Kurulumu..."], icon: ToolInstaller, shortcut: true },
  { cell: "col-start-22 row-start-4", label: ["Game Boost"], icon: GameBoost, shortcut: true },
  { cell: "col-start-23 row-start-4", label: ["Driver", "Booster 7"], icon: DriverBooster, shortcut: true },
  { cell: "col-start-24 row-start-4", label: ["Advanced", "SystemCare"], icon: SystemCare, shortcut: true },
];

function DesktopItem({ item }: { item: Item }) {
  const Icon = item.icon;
  return (
    <button type="button" className={`flex flex-col items-center gap-[3px] ${item.cell}`}>
      <span className="relative block h-12 w-12">
        <Icon />
        {item.shortcut && <ShortcutBadge />}
      </span>
      <span className="flex flex-col items-center text-[11px] leading-[15px] whitespace-nowrap text-white [text-shadow:1px_1px_2px_#000,0_1px_2px_#000]">
        {item.label.map((line) => (
          <span key={line}>{line}</span>
        ))}
      </span>
    </button>
  );
}

function BoosterWidget() {
  return (
    <div className="absolute top-[87px] right-[22px] flex items-center">
      <div className="z-10 flex h-[30px] w-[30px] items-center justify-center rounded-full bg-[#0c1a48]">
        <div className="flex h-[22px] w-[22px] items-center justify-center rounded-full bg-[#14295c]">
          <svg viewBox="0 0 10 18" className="h-[18px] w-[10px]" aria-hidden="true">
            <path d="M5 0c3 2 3 5 3 7l1 1v3H6v6H4v-6H1V8l1-1c0-2 0-5 3-7z" fill="#2f83ff" />
            <circle cx="5" cy="5" r="1.300" fill="#0c1a48" />
          </svg>
        </div>
      </div>
      <div className="-ml-2 flex h-5 w-[158px] items-center justify-between rounded-r-full bg-[#0c1a48] pr-[2px] pl-4 text-[12px] text-[#9fc0f2]">
        <span>
          RAM: 35 <small className="text-[9px]">%</small>
        </span>
        <span>
          CPU: 10 <small className="text-[9px]">%</small>
        </span>
        <button type="button" aria-label="Aç" className="flex h-4 w-4 items-center justify-center rounded-full bg-[#1b3a86]">
          <svg viewBox="0 0 10 10" className="h-[10px] w-[10px]" aria-hidden="true">
            <path d="M0 5h9M5 1l4 4-4 4" fill="none" stroke="#3d8bff" strokeWidth="1.500" />
          </svg>
        </button>
      </div>
    </div>
  );
}

/* ---------- DirectX window ---------- */

const device = [
  ["Ad:", "AMD Radeon HD 7650M"],
  ["Üretici:", "Advanced Micro Devices, Inc."],
  ["Yonga Türü:", "AMD Radeon Graphics Processor (0x6841)"],
  ["DAC Türü:", "Internal DAC(400MHz)"],
  ["Cihaz Türü:", "Yalnızca İşleyen Görüntü Bağdaştırıcısı"],
  ["Yaklaşık Top. Bellek:", "4844 MB"],
  ["Görüntü Belleği (VRAM):", "1004 MB"],
  ["Paylaşılan Bellek:", "3840 MB"],
];

const drivers = [
  ["Ana Sürücü:", "aticfx64.dll,aticfx64.dll,aticfx64.dll,amdxc64.dll"],
  ["Sürüm:", "15.201.1501.0"],
  ["Tarih:", "8/31/2015 03:00:00"],
  ["WHQL Logolu:", "Evet"],
  ["Direct3D DDI:", "11.2"],
  ["Özellik", "11_0,10_1,10_0,9_3,9_2,9_1"],
  ["Sürücü Modeli:", "WDDM 1.3"],
];

const features = [
  ["DirectDraw Hızlandırması:", "Etkin"],
  ["Direct3D Hızlandırması:", "Etkin"],
  ["AGP Doku Hızlandırması:", "Etkin"],
];

function Group({ title, className, children }: { title: string; className: string; children: ReactNode }) {
  return (
    <section className={`relative border border-[#dcdcdc] ${className}`}>
      <h2 className="absolute -top-2 left-1 bg-[#f0f0f0] px-[3px] leading-4">{title}</h2>
      {children}
    </section>
  );
}

function Rows({ rows, className, labelClass }: { rows: string[][]; className: string; labelClass: string }) {
  return (
    <dl className={`grid auto-rows-fr ${className}`}>
      {rows.map(([label, value]) => (
        <div key={label} className="flex items-center gap-[7px] whitespace-nowrap">
          <dt className={`shrink-0 text-right ${labelClass}`}>{label}</dt>
          <dd>{value}</dd>
        </div>
      ))}
    </dl>
  );
}

function ScrollArrow({ label, d }: { label: string; d: string }) {
  return (
    <button type="button" aria-label={label} className="flex h-[15px] w-[15px] shrink-0 items-center justify-center">
      <svg viewBox="0 0 8 8" className="h-2 w-2" aria-hidden="true">
        <path d={d} fill="none" stroke="#505050" strokeWidth="2" />
      </svg>
    </button>
  );
}

const tabs = [
  { name: "Sistem", size: "w-[43px]" },
  { name: "Ekran", size: "w-[41px]" },
  { name: "Oluşturucu", size: "w-[66px]", active: true },
  { name: "Ses", size: "w-[40px]" },
  { name: "Giriş", size: "w-[40px]" },
];

const dialogButton = "h-[21px] w-[126px] bg-[#e1e1e1] text-center leading-4";

function DxWindow() {
  return (
    <section
      aria-label="DirectX Tanı Aracı"
      className="absolute top-[307px] left-[848px] flex w-[728px] flex-col border border-[#1b4f80] bg-[#f0f0f0] font-[Roboto,'Noto_Sans',sans-serif] text-[11px] text-black shadow-[0_4px_14px_rgba(0,0,0,0.4)]"
    >
      <header className="flex h-[30px] items-center bg-white pl-2">
        <DirectX className="h-4 w-4" />
        <h1 className="ml-[5px] flex-1 font-['Open_Sans','Noto_Sans',sans-serif] text-[11px]">DirectX Tanı Aracı</h1>
        <button type="button" aria-label="Simge durumuna küçült" className="flex h-full w-[45px] items-center justify-center">
          <span className="h-px w-[10px] bg-black" />
        </button>
        <button type="button" aria-label="Ekranı kapla" className="flex h-full w-[45px] items-center justify-center">
          <span className="h-[10px] w-[10px] border border-[#c8c8c8]" />
        </button>
        <button type="button" aria-label="Kapat" className="flex h-full w-[47px] items-center justify-center">
          <svg viewBox="0 0 11 11" className="h-[11px] w-[11px]" aria-hidden="true">
            <path d="M.5.5l10 10M10.500.5l-10 10" stroke="#000" strokeWidth="1.200" />
          </svg>
        </button>
      </header>

      <div className="px-3 pt-[10px] pb-[13px]">
        <div role="tablist" className="flex h-[21px] items-end pl-[1px]">
          {tabs.map((tab) => (
            <button
              key={tab.name}
              type="button"
              role="tab"
              aria-selected={!!tab.active}
              className={
                tab.active
                  ? `relative z-10 -mb-px h-[22px] border border-b-0 border-[#dcdcdc] bg-white pb-[2px] text-center ${tab.size}`
                  : `h-[19px] border border-b-0 border-l-0 border-[#dcdcdc] pl-[5px] text-left first:border-l ${tab.size}`
              }
            >
              {tab.name}
            </button>
          ))}
        </div>

        <div className="flex w-[701px] flex-col border border-[#dcdcdc] bg-white p-[2px]">
          <div className="flex flex-col bg-[#f0f0f0] pt-[15px] pr-[7px] pb-[13px] pl-[11px]">
            <div className="flex justify-between pr-[1px]">
              <Group title="Cihaz" className="flex h-[177px] w-[388px]">
                <Rows rows={device} className="mt-[23px] h-[156px] flex-1 [clip-path:inset(0_0_4px_0)]" labelClass="w-[125px]" />
                <div className="mt-[6px] flex w-[18px] flex-col border-l border-white pr-[2px]">
                  <ScrollArrow label="Yukarı kaydır" d="M0 6l4-4 4 4" />
                  <div className="mt-[2px] h-[87px] bg-[#cdcdcd]" />
                  <div className="mt-auto">
                    <ScrollArrow label="Aşağı kaydır" d="M0 2l4 4 4-4" />
                  </div>
                </div>
              </Group>
              <Group title="Sürücüler" className="flex h-[177px] w-[279px] flex-col">
                <div className="mt-[23px] h-[135px] overflow-hidden">
                  <Rows rows={drivers} className="h-[137px]" labelClass="w-[88px]" />
                </div>
                <div className="flex border-t border-white">
                  <ScrollArrow label="Sola kaydır" d="M6 0L2 4l4 4" />
                  <div className="ml-[2px] h-[15px] w-[191px] bg-[#cdcdcd]" />
                  <div className="ml-auto">
                    <ScrollArrow label="Sağa kaydır" d="M2 0l4 4-4 4" />
                  </div>
                </div>
              </Group>
            </div>

            <Group title="DirectX Özellikleri" className="mt-[13px] h-[110px]">
              <dl className="mt-[9px] grid h-[89px] auto-rows-fr">
                {features.map(([label, value]) => (
                  <div key={label} className="flex items-center gap-[11px]">
                    <dt className="w-[165px] text-right">{label}</dt>
                    <dd>{value}</dd>
                  </div>
                ))}
              </dl>
            </Group>

            <Group title="Notlar" className="mt-[13px] h-[76px] px-2 pt-[10px]">
              <textarea
                aria-label="Notlar"
                readOnly
                defaultValue={"•\tSorun bulunmadı."}
                className="block h-[57px] w-full resize-none border border-t-2 border-l-2 border-t-[#7a7a7a] border-r-white border-b-white border-l-[#7a7a7a] bg-white px-[2px] leading-4 outline-none [tab-size:22px]"
              />
            </Group>
          </div>
        </div>

        <div className="mt-[13px] flex gap-2">
          <button type="button" className={`mr-auto border border-[#adadad] ${dialogButton}`}>
            Yardım
          </button>
          <button type="button" className={`border-2 border-[#0078d7] ${dialogButton}`}>
            Sonraki Sayfa
          </button>
          <button type="button" className={`border border-[#adadad] ${dialogButton}`}>
            Tüm Bilgileri Kaydet...
          </button>
          <button type="button" className={`border border-[#adadad] ${dialogButton}`}>
            Çıkış
          </button>
        </div>
      </div>
    </section>
  );
}

/* ---------- taskbar ---------- */

function TaskView() {
  return (
    <svg viewBox="0 0 18 18" className="h-[18px] w-[18px]" aria-hidden="true">
      <path d="M1.500 1v2.500h9V1M1.500 5.500h9v7h-9zM1.500 17v-2.500h9V17M14.500 1v3M14.500 8v9" fill="none" stroke="#fff" />
      <path d="M13 5h3v3h-3z" fill="#fff" />
    </svg>
  );
}

function Explorer() {
  return (
    <svg viewBox="0 0 24 20" className="h-5 w-6" aria-hidden="true">
      <path d="M1 2h8l2 2h11v14H1z" fill="#e8a33a" />
      <path d="M1 6h21v12H1z" fill="#ffd970" />
      <path d="M5 12h14v7h-4v-4H9v4H5z" fill="#3fa0e6" />
    </svg>
  );
}

const pinned: { name: string; icon: ReactNode; state?: string }[] = [
  { name: "Görev Görünümü", icon: <TaskView /> },
  { name: "Dosya Gezgini", icon: <Explorer /> },
  {
    name: "Yandex",
    icon: <Yandex className="h-6 w-6" />,
    state: "mx-1 w-10 border-b-2 border-[#5be03f] bg-linear-to-r from-[#45824f] from-88% to-[#46596a] to-88%",
  },
  { name: "League of Legends", icon: <League className="h-6 w-6" /> },
  { name: "Discord", icon: <Discord className="h-6 w-6" /> },
  { name: "Steam", icon: <Steam className="h-6 w-6" /> },
  { name: "Spotify", icon: <Spotify className="h-6 w-6" /> },
  { name: "Advanced SystemCare", icon: <SystemCare className="h-6 w-6" /> },
  { name: "Driver Booster", icon: <DriverBooster className="h-6 w-6" /> },
  { name: "DirectX Tanı Aracı", icon: <DirectX className="h-6 w-6" />, state: "w-12 border-b-2 border-[#76b9ed] bg-[#4c5f6c]" },
];

function Tray() {
  return (
    <div className="ml-auto flex h-full items-center text-white">
      <button type="button" aria-label="Gizli simgeleri göster" className="flex w-6 justify-center">
        <svg viewBox="0 0 12 7" className="h-[7px] w-3" aria-hidden="true">
          <path d="M.5 6.500L6 1l5.500 5.500" fill="none" stroke="#fff" strokeWidth="1.300" />
        </svg>
      </button>
      <button type="button" aria-label="Ağ" className="flex w-6 justify-center">
        <svg viewBox="0 0 13 13" className="h-[13px] w-[13px]" aria-hidden="true">
          <g fill="none" stroke="#fff">
            <path d="M1 12.500C1 6 6 1 12.500 1" opacity=".6" />
            <path d="M4 12.500C4 8 8 4 12.500 4" />
            <path d="M7 12.500C7 9.500 9.500 7 12.500 7" />
          </g>
          <circle cx="11" cy="11" r="1.700" fill="#fff" />
        </svg>
      </button>
      <button type="button" aria-label="Ses" className="flex w-6 justify-center">
        <svg viewBox="0 0 17 13" className="h-[13px] w-[17px]" aria-hidden="true">
          <path d="M.5 4.500H3l3.500-3.500v11L3 8.500H.5zM9 4.500c1 1 1 3 0 4M11.500 2.500c2 2 2 6 0 8M14 1c3 3 3 8 0 11" fill="none" stroke="#fff" />
        </svg>
      </button>
      <button type="button" aria-label="Bulut" className="flex w-6 justify-center">
        <svg viewBox="0 0 16 12" className="h-3 w-4" aria-hidden="true">
          <path d="M4 11a3.500 3.500 0 0 1-.5-6.900A5 5 0 0 1 12.500 4.500 3.300 3.300 0 0 1 12.500 11z" fill="#fff" />
          <path d="M8 4.500l2.500 2.500H9v2.500H7V7H5.500z" fill="#1c2a42" />
        </svg>
      </button>
      <button type="button" className="flex w-[66px] flex-col items-center text-[11px] leading-[18px]">
        <time>01:42</time>
        <time>22.05.2020</time>
      </button>
      <button type="button" aria-label="Bildirimler" className="flex w-10 justify-center">
        <svg viewBox="0 0 17 17" className="h-[17px] w-[17px]" aria-hidden="true">
          <path d="M0 0h16v13H6l-3 3v-3H0z" fill="#fff" />
          <path d="M3 3.500h10M3 6.500h10M3 9.500h6" stroke="#1c2a42" />
          <path d="M14 8c2 3 0 7-4 7 2 2 7 1 7-3 0-2-1-3-3-4z" fill="#fff" stroke="#1c2a42" strokeWidth=".8" />
        </svg>
      </button>
      <div className="ml-2 h-full w-[5px] border-l border-[#7b8494]" />
    </div>
  );
}

function Taskbar() {
  return (
    <footer className="relative flex h-10 shrink-0 items-center bg-linear-to-r from-[#233b45] via-[#20343f] to-[#1a2743]">
      <button type="button" aria-label="Başlat" className="flex h-full w-12 items-center justify-center">
        <FaWindows className="h-4 w-4 text-white" />
      </button>
      <label className="flex h-full w-[344px] items-center gap-3 border border-[#b9bfc3] bg-[#f2f2f2] pl-3">
        <svg viewBox="0 0 16 16" className="h-4 w-4" aria-hidden="true">
          <circle cx="10" cy="6" r="5" fill="none" stroke="#222" strokeWidth="1.300" />
          <path d="M6.500 9.500L1 15" stroke="#222" strokeWidth="1.300" />
        </svg>
        <input
          type="text"
          aria-label="Ara"
          placeholder="Aramak için buraya yazın"
          className="w-full bg-transparent text-[14px] text-[#333] outline-none placeholder:text-[#3c3c3c]"
        />
      </label>
      <nav className="ml-[2px] flex h-full gap-px">
        {pinned.map((app) => (
          <button key={app.name} type="button" aria-label={app.name} className={`flex h-full items-center justify-center ${app.state ?? "w-12"}`}>
            {app.icon}
          </button>
        ))}
      </nav>
      <Tray />
    </footer>
  );
}

export default function App() {
  return (
    <div className="relative flex h-screen flex-col overflow-hidden bg-[#0093f0] font-['Open_Sans','Noto_Sans',sans-serif]">
      <Wallpaper />
      <main className="relative flex-1">
        <div className="grid auto-rows-[101px] grid-cols-[repeat(25,76px)] pt-[7px]">
          {items.map((item) => (
            <DesktopItem key={item.cell} item={item} />
          ))}
        </div>
        <BoosterWidget />
        <DxWindow />
      </main>
      <Taskbar />
    </div>
  );
}
